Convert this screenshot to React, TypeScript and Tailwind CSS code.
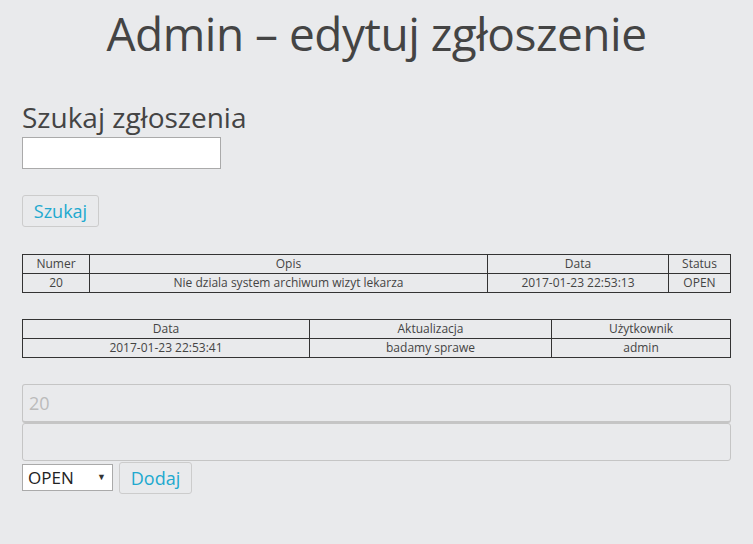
export default function App() {
  return (
    <div
      className="min-h-[544px] bg-[#e9eaec] px-[22px] text-[#444]"
      style={{ fontFamily: '"Open Sans", "Noto Sans", sans-serif' }}
    >
      {/* Title */}
      <h1 className="pt-[2px] text-center text-[46px] leading-[62px] tracking-[-0.5px]">
        Admin – edytuj zgłoszenie
      </h1>

      {/* Search */}
      <h2 className="mt-[33px] text-[28px] leading-[40px]">Szukaj zgłoszenia</h2>
      <input type="text" className="block h-[32px] w-[199px] border border-[#aaa] bg-white" />
      <button className="mt-[26px] block h-[32px] w-[77px] rounded-[3px] border border-[#ccc] text-[18px] text-[#21a9cf]">
        Szukaj
      </button>

      {/* Ticket table */}
      <table className="mt-[27px] w-full border-collapse text-center text-[12px] leading-[18px]">
        <thead>
          <tr>
            <th className="w-[67px] border border-[#333] font-normal">Numer</th>
            <th className="w-[398px] border border-[#333] font-normal">Opis</th>
            <th className="w-[181px] border border-[#333] font-normal">Data</th>
            <th className="border border-[#333] font-normal">Status</th>
          </tr>
        </thead>
        <tbody>
          <tr>
            <td className="border border-[#333]">20</td>
            <td className="border border-[#333]">Nie dziala system archiwum wizyt lekarza</td>
            <td className="border border-[#333]">2017-01-23 22:53:13</td>
            <td className="border border-[#333]">OPEN</td>
          </tr>
        </tbody>
      </table>

      {/* Updates table */}
      <table className="mt-[26px] w-full border-collapse text-center text-[12px] leading-[18px]">
        <thead>
          <tr>
            <th className="w-[287px] border border-[#333] font-normal">Data</th>
            <th className="w-[242px] border border-[#333] font-normal">Aktualizacja</th>
            <th className="border border-[#333] font-normal">Użytkownik</th>
          </tr>
        </thead>
        <tbody>
          <tr>
            <td className="border border-[#333]">2017-01-23 22:53:41</td>
            <td className="border border-[#333]">badamy sprawe</td>
            <td className="border border-[#333]">admin</td>
          </tr>
        </tbody>
      </table>

      {/* Add update form */}
      <div className="mt-[26px]">
        <input
          type="text"
          disabled
          value="20"
          className="block h-[39px] w-full rounded-[3px] border border-[#c5c5c5] border-b-2 bg-transparent px-[6px] text-[18px] text-[#bbb]"
        />
        <input
          type="text"
          className="block h-[38px] w-full rounded-[3px] border border-[#c5c5c5] bg-transparent px-[6px] text-[18px]"
        />
        <div className="mt-[1px] flex items-start gap-[6px]">
          <div className="relative mt-[2px] h-[27px] w-[91px] border border-[#aaa] bg-white">
            <span className="absolute left-[5px] top-[2px] text-[17px] leading-[22px] text-[#222]">OPEN</span>
            <span className="absolute right-[6px] top-[6px] text-[9px] leading-[12px] text-[#333]">▼</span>
          </div>
          <button className="h-[32px] w-[73px] rounded-[3px] border border-[#ccc] text-[18px] text-[#21a9cf]">
            Dodaj
          </button>
        </div>
      </div>
    </div>
  );
}
